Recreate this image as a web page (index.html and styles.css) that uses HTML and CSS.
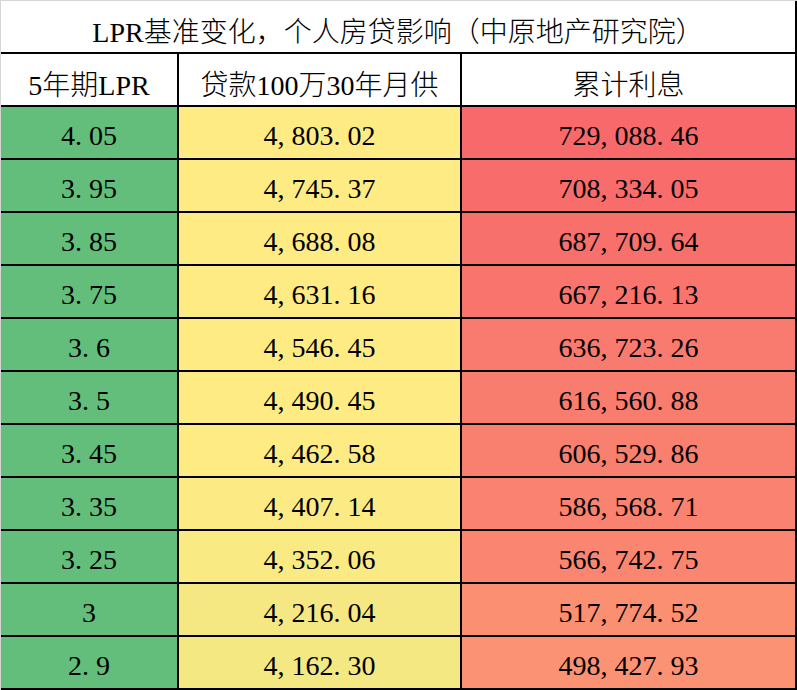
FILE: index.html
```html
<!DOCTYPE html>
<html lang="zh-CN">
<head>
<meta charset="utf-8">
<title>LPR基准变化</title>
<link rel="stylesheet" href="styles.css">
</head>
<body>
<div class="sheet">
  <div class="grid">
    <div class="cell title">LPR基准变化，个人房贷影响（中原地产研究院）</div>
    <div class="cell head">5年期LPR</div>
    <div class="cell head">贷款100万30年月供</div>
    <div class="cell head">累计利息</div>

    <div class="cell rate">4<span class="p">.</span>05</div>
    <div class="cell" style="background:#ffeb84">4<span class="p">,</span>803<span class="p">.</span>02</div>
    <div class="cell" style="background:#f8696b">729<span class="p">,</span>088<span class="p">.</span>46</div>

    <div class="cell rate">3<span class="p">.</span>95</div>
    <div class="cell" style="background:#ffeb84">4<span class="p">,</span>745<span class="p">.</span>37</div>
    <div class="cell" style="background:#f86d6c">708<span class="p">,</span>334<span class="p">.</span>05</div>

    <div class="cell rate">3<span class="p">.</span>85</div>
    <div class="cell" style="background:#ffeb84">4<span class="p">,</span>688<span class="p">.</span>08</div>
    <div class="cell" style="background:#f8706c">687<span class="p">,</span>709<span class="p">.</span>64</div>

    <div class="cell rate">3<span class="p">.</span>75</div>
    <div class="cell" style="background:#ffeb84">4<span class="p">,</span>631<span class="p">.</span>16</div>
    <div class="cell" style="background:#f9746d">667<span class="p">,</span>216<span class="p">.</span>13</div>

    <div class="cell rate">3<span class="p">.</span>6</div>
    <div class="cell" style="background:#ffeb84">4<span class="p">,</span>546<span class="p">.</span>45</div>
    <div class="cell" style="background:#f97a6e">636<span class="p">,</span>723<span class="p">.</span>26</div>

    <div class="cell rate">3<span class="p">.</span>5</div>
    <div class="cell" style="background:#ffeb84">4<span class="p">,</span>490<span class="p">.</span>45</div>
    <div class="cell" style="background:#f97d6f">616<span class="p">,</span>560<span class="p">.</span>88</div>

    <div class="cell rate">3<span class="p">.</span>45</div>
    <div class="cell" style="background:#feeb84">4<span class="p">,</span>462<span class="p">.</span>58</div>
    <div class="cell" style="background:#f97f6f">606<span class="p">,</span>529<span class="p">.</span>86</div>

    <div class="cell rate">3<span class="p">.</span>35</div>
    <div class="cell" style="background:#fcea84">4<span class="p">,</span>407<span class="p">.</span>14</div>
    <div class="cell" style="background:#f98370">586<span class="p">,</span>568<span class="p">.</span>71</div>

    <div class="cell rate">3<span class="p">.</span>25</div>
    <div class="cell" style="background:#faea84">4<span class="p">,</span>352<span class="p">.</span>06</div>
    <div class="cell" style="background:#fa8671">566<span class="p">,</span>742<span class="p">.</span>75</div>

    <div class="cell rate">3</div>
    <div class="cell" style="background:#f5e883">4<span class="p">,</span>216<span class="p">.</span>04</div>
    <div class="cell" style="background:#fa8f72">517<span class="p">,</span>774<span class="p">.</span>52</div>

    <div class="cell rate">2<span class="p">.</span>9</div>
    <div class="cell" style="background:#f4e883">4<span class="p">,</span>162<span class="p">.</span>30</div>
    <div class="cell" style="background:#fa9273">498<span class="p">,</span>427<span class="p">.</span>93</div>
  </div>
</div>
</body>
</html>
```
FILE: styles.css
```css
html, body {
  margin: 0;
  padding: 0;
  background: #ffffff;
}

.sheet {
  width: 796px;
  border-top: 1px solid #d6d6d6;
  border-left: 1px solid #d6d6d6;
}

.grid {
  display: grid;
  grid-template-columns: 176px 281px 333px;
  grid-auto-rows: 51px;
  gap: 2px;
  padding: 0 2px 2px 0;
  background: #000000;
  width: 794px;
}

.cell {
  display: flex;
  align-items: center;
  justify-content: center;
  padding-top: 6px;
  box-sizing: border-box;
  background: #ffffff;
  color: #000000;
  font-family: "Liberation Serif", "Noto Sans CJK SC", serif;
  font-size: 28px;
  font-weight: 300;
  white-space: nowrap;
}

.title {
  grid-column: 1 / 4;
}

.rate {
  background: #63be7b;
}

.p {
  display: inline-block;
  width: 0.5em;
  text-align: left;
}
```
